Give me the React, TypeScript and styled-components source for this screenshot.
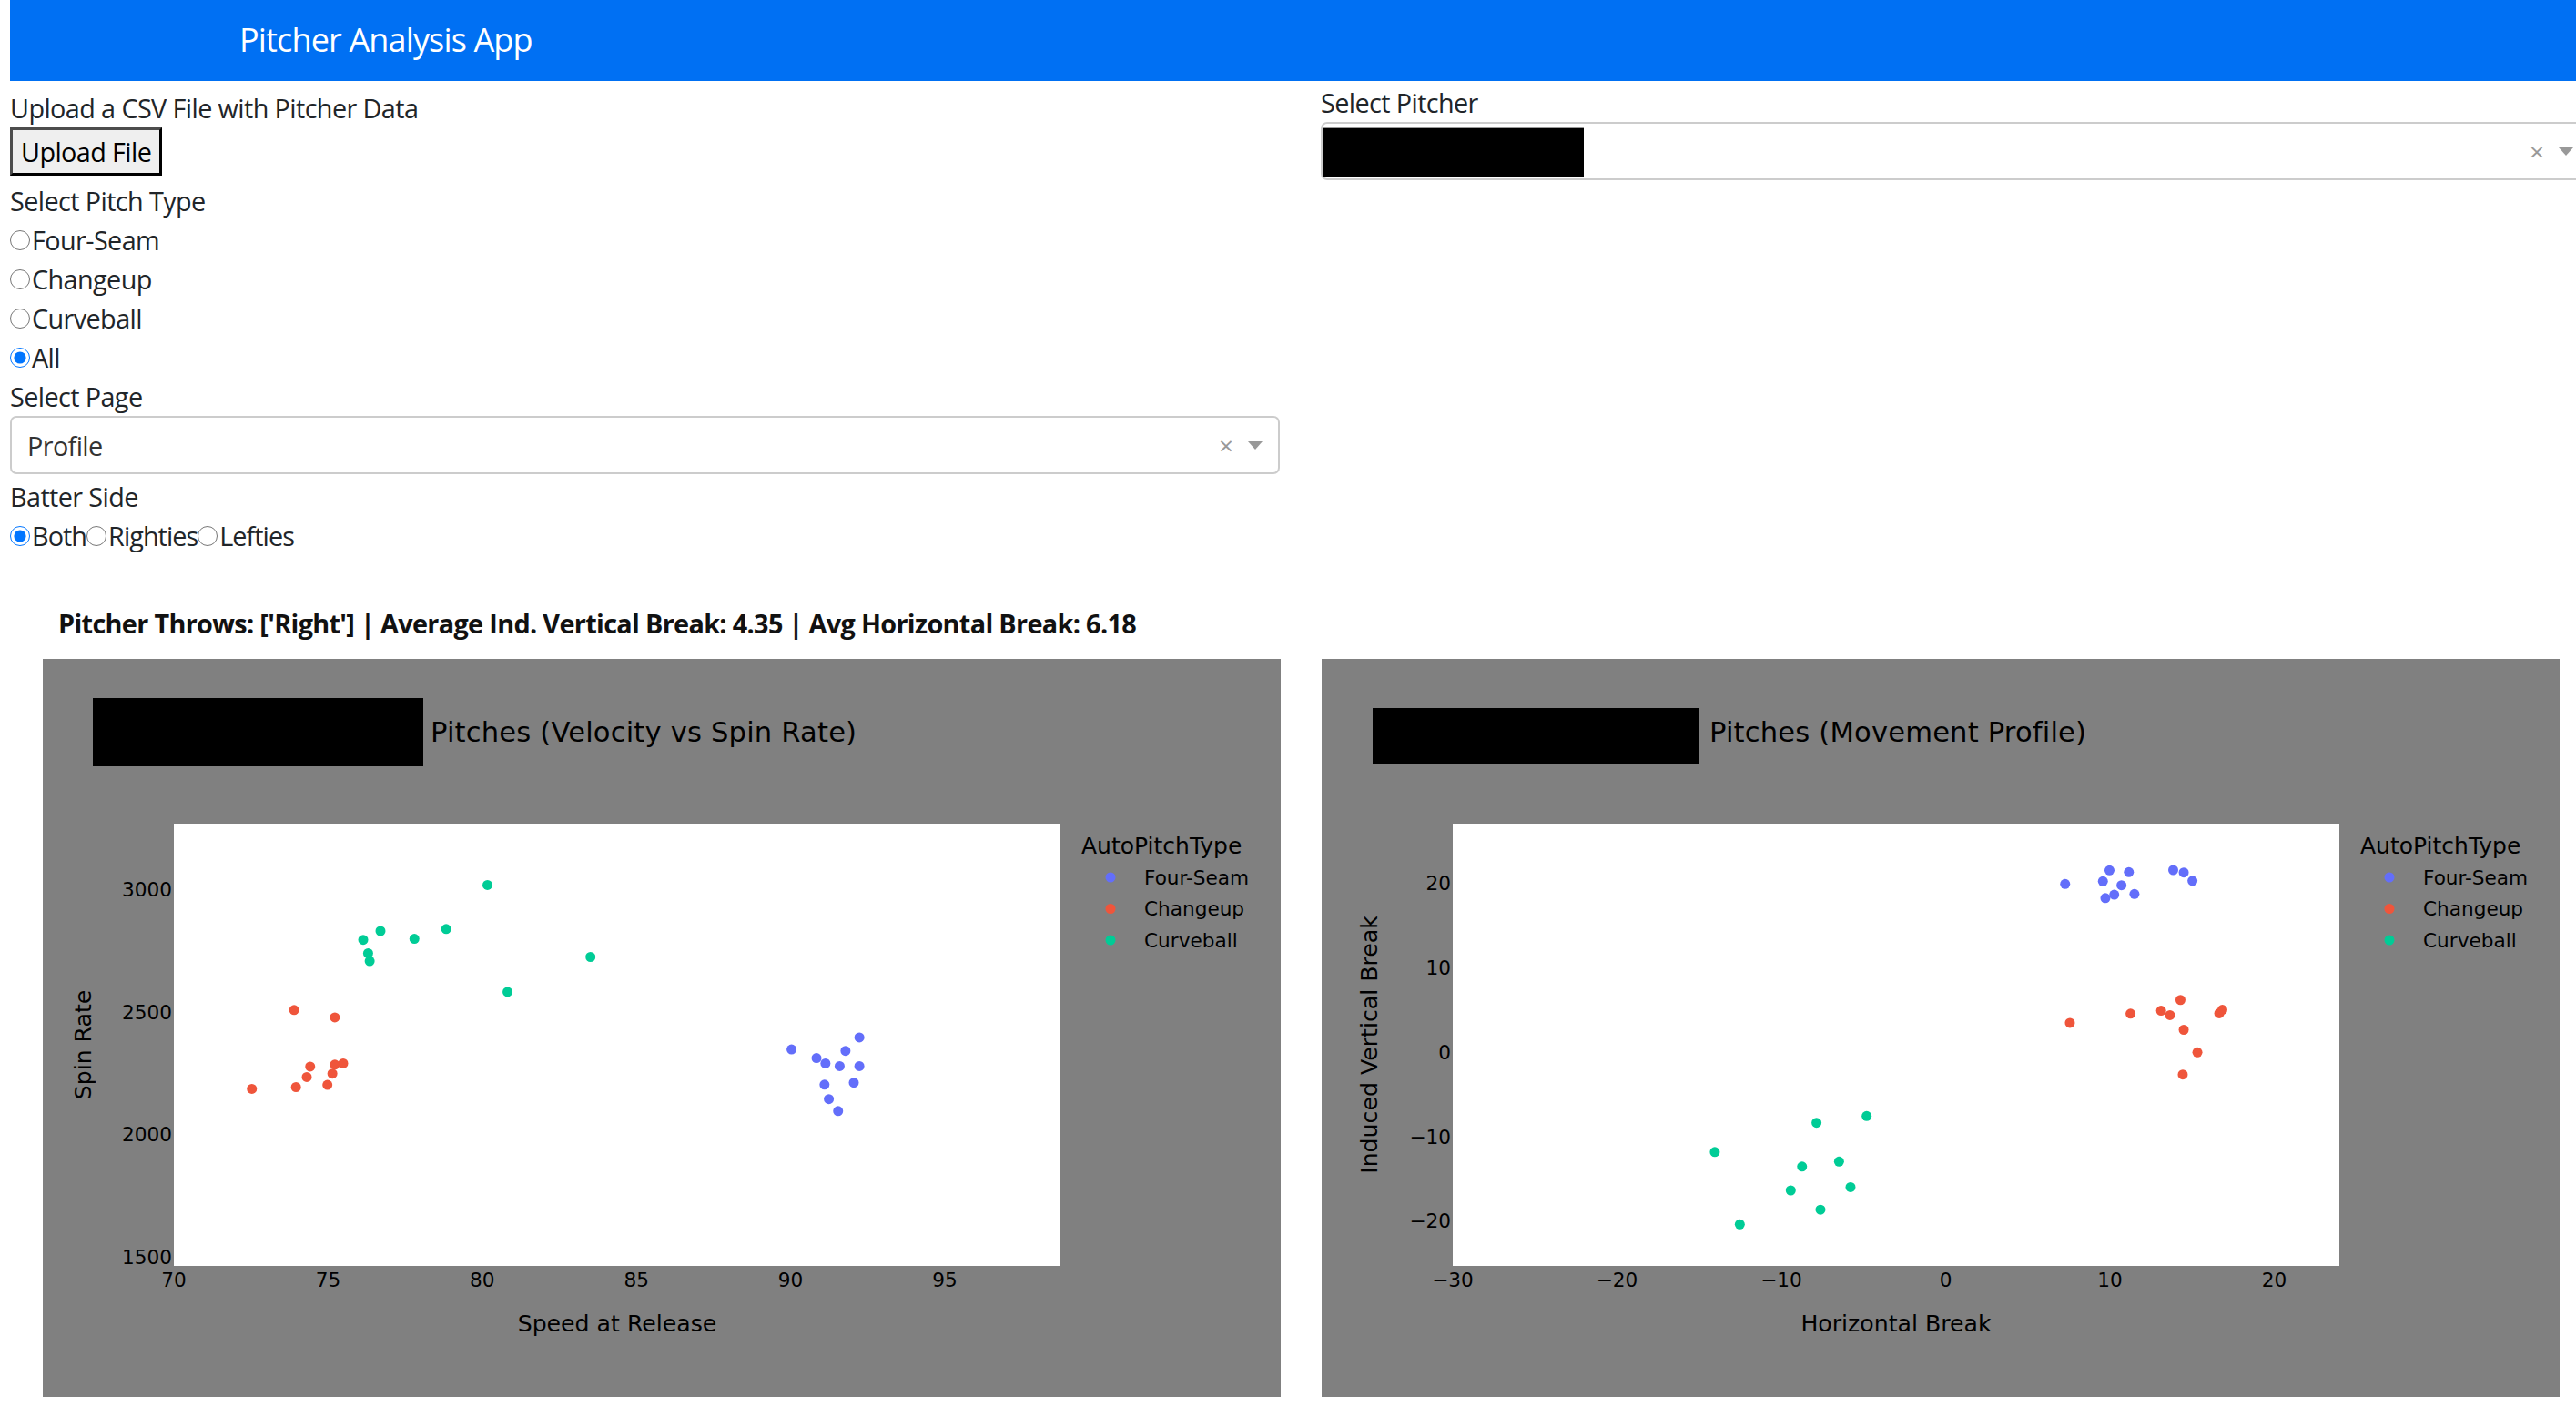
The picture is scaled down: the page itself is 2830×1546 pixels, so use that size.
import React from 'react'
import styled, { createGlobalStyle } from 'styled-components'

const GlobalStyle = createGlobalStyle`
  html, body {
    margin: 0;
    padding: 0;
    overflow: hidden;
    background: #fff;
  }
  body {
    font-family: "Open Sans", "Noto Sans", Arial, sans-serif;
    color: #212529;
  }
`

const Page = styled.div`
  padding-left: 11px;
  width: 2830px;
  box-sizing: border-box;
`

const Header = styled.header`
  height: 89px;
  background: #0070f3;
  display: flex;
  align-items: center;
  padding-left: 252px;
  padding-bottom: 3px;
  box-sizing: border-box;
  margin-bottom: 2px;
`

const AppTitle = styled.h1`
  margin: 0;
  font-size: 36px;
  font-weight: 400;
  color: #fff;
  letter-spacing: -0.85px;
`

const Controls = styled.div`
  display: grid;
  grid-template-columns: 1395px 1395px;
  column-gap: 45px;
`

const Column = styled.div<{ $top: number }>`
  display: flex;
  flex-direction: column;
  padding-top: ${p => p.$top}px;
`

const FieldLabel = styled.div`
  font-size: 28.8px;
  line-height: 43px;
  letter-spacing: -0.6px;
`

const UploadButton = styled.button`
  align-self: flex-start;
  height: 53px;
  margin: 0 0 6px;
  padding: 0 9px;
  font-family: inherit;
  font-size: 28.8px;
  letter-spacing: -0.6px;
  color: #000;
  background: #efefef;
  border: 3px solid;
  border-color: #4d4d4d #000 #000 #4d4d4d;
  box-sizing: border-box;
`

const RadioList = styled.div<{ $inline?: boolean }>`
  display: flex;
  flex-direction: ${p => (p.$inline ? 'row' : 'column')};
`

const RadioOption = styled.label<{ $tight?: boolean }>`
  display: flex;
  align-items: center;
  height: 43px;
  font-size: 28.8px;
  letter-spacing: ${p => (p.$tight ? '-0.95px' : '-0.6px')};
`

const RadioInput = styled.input`
  width: 22px;
  height: 22px;
  margin: 0 2px 0 0;
  accent-color: #0075ff;
`

const Select = styled.div<{ $compact?: boolean }>`
  height: 64px;
  box-sizing: border-box;
  border: 2px solid #ccc;
  border-radius: 7px;
  display: flex;
  align-items: center;
  padding-left: ${p => (p.$compact ? '1px' : '17px')};
  margin-bottom: 3px;
  background: #fff;
`

const SelectValue = styled.span`
  font-size: 28.8px;
  letter-spacing: -0.6px;
  color: #333;
`

const Redacted = styled.span<{ $w: number; $h: number }>`
  display: inline-block;
  width: ${p => p.$w}px;
  height: ${p => p.$h}px;
  background: #000;
  border-top: 2px solid #999;
  box-sizing: border-box;
`

const SelectTools = styled.div`
  margin-left: auto;
  display: flex;
  align-items: center;
`

const ClearMark = styled.span`
  width: 30px;
  text-align: center;
  font-size: 28px;
  line-height: 1;
  color: #999;
  margin-right: 9px;
`

const Caret = styled.span`
  width: 0;
  height: 0;
  border-left: 8px solid transparent;
  border-right: 8px solid transparent;
  border-top: 9px solid #999;
  margin-right: 17px;
`

const Results = styled.section`
  padding: 53px 0 0 36px;
`

const StatLine = styled.div`
  margin: 0 0 18px 17px;
  font-size: 28.8px;
  line-height: 43px;
  font-weight: 700;
  letter-spacing: -0.66px;
  color: #111;
`

const ChartsRow = styled.div`
  display: flex;
  gap: 45px;
`

const ChartFrame = styled.svg`
  display: block;
  flex: none;
  background: #808080;
  font-family: "DejaVu Sans", Verdana, sans-serif;
`

const PlotBg = styled.rect`
  fill: #fff;
`

const ChartTitle = styled.text`
  font-size: 30.6px;
  letter-spacing: 0.17px;
  fill: #000;
`

const TickText = styled.text`
  font-size: 21.6px;
  fill: #000;
`

const AxisTitle = styled.text`
  font-size: 25.2px;
  fill: #000;
`

const LegendTitle = styled.text`
  font-size: 25px;
  fill: #000;
`

const LegendLabel = styled.text`
  font-size: 21.6px;
  fill: #000;
`

type Point = [number, number]
type Series = { name: string; color: string; points: Point[] }

const FOUR = '#636efa'
const CHANGE = '#ef553b'
const CURVE = '#00cc96'

const velocitySeries: Series[] = [
  {
    name: 'Four-Seam',
    color: FOUR,
    points: [
      [92.23, 2397], [90.03, 2348], [91.78, 2342], [90.84, 2313], [91.13, 2291], [91.59, 2280],
      [92.23, 2280], [91.1, 2204], [92.05, 2212], [91.24, 2145], [91.54, 2096],
    ],
  },
  {
    name: 'Changeup',
    color: CHANGE,
    points: [
      [73.9, 2509], [75.22, 2479], [74.42, 2278], [75.22, 2286], [75.49, 2291],
      [74.31, 2235], [75.14, 2249], [72.53, 2187], [73.96, 2194], [74.98, 2203],
    ],
  },
  {
    name: 'Curveball',
    color: CURVE,
    points: [
      [76.7, 2832], [76.14, 2796], [77.8, 2800], [78.83, 2840], [76.3, 2741],
      [76.35, 2709], [83.51, 2726], [80.82, 2583], [80.17, 3020],
    ],
  },
]

const movementSeries: Series[] = [
  {
    name: 'Four-Seam',
    color: FOUR,
    points: [
      [7.27, 19.95], [9.97, 21.57], [11.15, 21.35], [9.57, 20.27], [10.7, 19.8], [10.26, 18.68],
      [9.72, 18.28], [11.49, 18.76], [13.85, 21.6], [14.49, 21.31], [15.02, 20.33],
    ],
  },
  {
    name: 'Changeup',
    color: CHANGE,
    points: [
      [14.29, 6.21], [11.25, 4.59], [13.11, 4.94], [13.65, 4.41], [16.65, 4.63],
      [16.84, 5.04], [7.56, 3.5], [14.49, 2.68], [15.32, 0], [14.43, -2.62],
    ],
  },
  {
    name: 'Curveball',
    color: CURVE,
    points: [
      [-4.81, -7.55], [-7.86, -8.34], [-14.05, -11.8], [-6.49, -12.93], [-8.74, -13.53],
      [-5.79, -15.97], [-9.43, -16.35], [-7.62, -18.64], [-12.53, -20.38],
    ],
  },
]

// plot area inside the 1360x811 figure
const W = 1360
const H = 811
const PX = 144
const PY = 181
const PW = 974
const PH = 486

const fmt = (n: number) => (n < 0 ? `\u2212${Math.abs(n)}` : `${n}`)

type ChartProps = {
  title: string
  redact: { x: number; y: number; w: number; h: number }
  xDomain: [number, number]
  yDomain: [number, number]
  xTicks: number[]
  yTicks: number[]
  xTitle: string
  yTitle: string
  yTitleX: number
  series: Series[]
}

function ScatterChart({ title, redact, xDomain, yDomain, xTicks, yTicks, xTitle, yTitle, yTitleX, series }: ChartProps) {
  const sx = (v: number) => PX + ((v - xDomain[0]) / (xDomain[1] - xDomain[0])) * PW
  const sy = (v: number) => PY + PH - ((v - yDomain[0]) / (yDomain[1] - yDomain[0])) * PH
  const yMid = PY + PH / 2

  return (
    <ChartFrame width={W} height={H} viewBox={`0 0 ${W} ${H}`}>
      <rect x={redact.x} y={redact.y} width={redact.w} height={redact.h} fill="#000" />
      <ChartTitle x={426} y={80} dominantBaseline="central">{title}</ChartTitle>

      <PlotBg x={PX} y={PY} width={PW} height={PH} />
      {series.map(s =>
        s.points.map(([a, b], i) => (
          <circle key={`${s.name}-${i}`} cx={sx(a)} cy={sy(b)} r={5.5} fill={s.color} />
        ))
      )}

      {yTicks.map(t => (
        <TickText key={`y${t}`} x={PX - 2} y={sy(t)} textAnchor="end" dominantBaseline="central">
          {fmt(t)}
        </TickText>
      ))}
      {xTicks.map(t => (
        <TickText key={`x${t}`} x={sx(t)} y={682} textAnchor="middle" dominantBaseline="central">
          {fmt(t)}
        </TickText>
      ))}

      <AxisTitle x={PX + PW / 2} y={730} textAnchor="middle" dominantBaseline="central">
        {xTitle}
      </AxisTitle>
      <AxisTitle
        x={yTitleX}
        y={yMid}
        textAnchor="middle"
        dominantBaseline="central"
        transform={`rotate(-90 ${yTitleX} ${yMid})`}
      >
        {yTitle}
      </AxisTitle>

      <LegendTitle x={1141} y={205} dominantBaseline="central">AutoPitchType</LegendTitle>
      {series.map((s, i) => (
        <g key={s.name}>
          <circle cx={1173} cy={240 + i * 34.5} r={5.5} fill={s.color} />
          <LegendLabel x={1210} y={240 + i * 34.5} dominantBaseline="central">{s.name}</LegendLabel>
        </g>
      ))}
    </ChartFrame>
  )
}

export default function App() {
  return (
    <>
      <GlobalStyle />
      <Page>
        <Header>
          <AppTitle>Pitcher Analysis App</AppTitle>
        </Header>

        <Controls>
          <Column $top={6}>
            <FieldLabel>Upload a CSV File with Pitcher Data</FieldLabel>
            <UploadButton>Upload File</UploadButton>

            <FieldLabel>Select Pitch Type</FieldLabel>
            <RadioList>
              {['Four-Seam', 'Changeup', 'Curveball', 'All'].map(p => (
                <RadioOption key={p}>
                  <RadioInput type="radio" name="pitch" defaultChecked={p === 'All'} />
                  {p}
                </RadioOption>
              ))}
            </RadioList>

            <FieldLabel>Select Page</FieldLabel>
            <Select>
              <SelectValue>Profile</SelectValue>
              <SelectTools>
                <ClearMark>×</ClearMark>
                <Caret />
              </SelectTools>
            </Select>

            <FieldLabel>Batter Side</FieldLabel>
            <RadioList $inline>
              {['Both', 'Righties', 'Lefties'].map(s => (
                <RadioOption key={s} $tight>
                  <RadioInput type="radio" name="side" defaultChecked={s === 'Both'} />
                  {s}
                </RadioOption>
              ))}
            </RadioList>
          </Column>

          <Column $top={0}>
            <FieldLabel>Select Pitcher</FieldLabel>
            <Select $compact>
              <Redacted $w={286} $h={55} />
              <SelectTools>
                <ClearMark>×</ClearMark>
                <Caret />
              </SelectTools>
            </Select>
          </Column>
        </Controls>

        <Results>
          <StatLine>
            Pitcher Throws: ['Right'] | Average Ind. Vertical Break: 4.35 | Avg Horizontal Break: 6.18
          </StatLine>
          <ChartsRow>
            <ScatterChart
              title="Pitches (Velocity vs Spin Rate)"
              redact={{ x: 55, y: 43, w: 363, h: 75 }}
              xDomain={[70, 98.75]}
              yDomain={[1463, 3271]}
              xTicks={[70, 75, 80, 85, 90, 95]}
              yTicks={[1500, 2000, 2500, 3000]}
              xTitle="Speed at Release"
              yTitle="Spin Rate"
              yTitleX={44}
              series={velocitySeries}
            />
            <ScatterChart
              title="Pitches (Movement Profile)"
              redact={{ x: 56, y: 54, w: 358, h: 61 }}
              xDomain={[-30, 23.96]}
              yDomain={[-25.3, 27.1]}
              xTicks={[-30, -20, -10, 0, 10, 20]}
              yTicks={[-20, -10, 0, 10, 20]}
              xTitle="Horizontal Break"
              yTitle="Induced Vertical Break"
              yTitleX={52}
              series={movementSeries}
            />
          </ChartsRow>
        </Results>
      </Page>
    </>
  )
}
